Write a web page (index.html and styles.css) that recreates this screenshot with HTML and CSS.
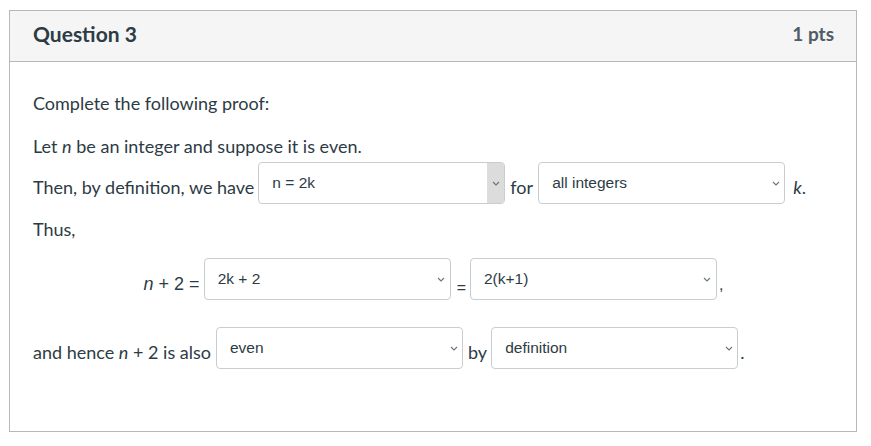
FILE: index.html
```html
<!DOCTYPE html>
<html lang="en">
<head>
<meta charset="utf-8">
<title>Question 3</title>
<link rel="stylesheet" href="styles.css">
</head>
<body>
<div class="card">
  <div class="card-header">
    <h2 class="title">Question 3</h2>
    <span class="pts">1 pts</span>
  </div>
  <div class="card-body">
    <p class="line">Complete the following proof:</p>
    <p class="line line-let">Let <i>n</i> be an integer and suppose it is even.</p>
    <div class="row row-then">
      <span class="txt">Then, by definition, we have</span>
      <div class="sel sel-hover sel-first"><span class="val">n = 2k</span><span class="caret"><svg width="8" height="5" viewBox="0 0 8 5"><path d="M1 1l3 3 3-3" fill="none" stroke="#6b747b" stroke-width="1.1"/></svg></span></div>
      <span class="txt">for</span>
      <div class="sel"><span class="val">all integers</span><span class="caret"><svg width="8" height="5" viewBox="0 0 8 5"><path d="M1 1l3 3 3-3" fill="none" stroke="#6b747b" stroke-width="1.1"/></svg></span></div>
      <span class="txt txt-k"><i>k</i>.</span>
    </div>
    <p class="line line-thus">Thus,</p>
    <div class="row row-eq">
      <span class="math"><i>n</i> + 2 =</span>
      <div class="sel"><span class="val">2k + 2</span><span class="caret"><svg width="8" height="5" viewBox="0 0 8 5"><path d="M1 1l3 3 3-3" fill="none" stroke="#6b747b" stroke-width="1.1"/></svg></span></div>
      <span class="eq-sign">=</span>
      <div class="sel"><span class="val">2(k+1)</span><span class="caret"><svg width="8" height="5" viewBox="0 0 8 5"><path d="M1 1l3 3 3-3" fill="none" stroke="#6b747b" stroke-width="1.1"/></svg></span></div>
      <span class="comma">,</span>
    </div>
    <div class="row row-hence">
      <span class="txt">and hence <i>n</i> + 2 is also</span>
      <div class="sel"><span class="val">even</span><span class="caret"><svg width="8" height="5" viewBox="0 0 8 5"><path d="M1 1l3 3 3-3" fill="none" stroke="#6b747b" stroke-width="1.1"/></svg></span></div>
      <span class="txt">by</span>
      <div class="sel sel-last"><span class="val">definition</span><span class="caret"><svg width="8" height="5" viewBox="0 0 8 5"><path d="M1 1l3 3 3-3" fill="none" stroke="#6b747b" stroke-width="1.1"/></svg></span></div>
      <span class="txt txt-dot">.</span>
    </div>
  </div>
</div>
</body>
</html>
```

FILE: styles.css
```css
* { box-sizing: border-box; }

html, body {
  margin: 0;
  padding: 0;
  background: #ffffff;
}

body {
  font-family: Lato, "Liberation Sans", sans-serif;
  color: #2d3b45;
  font-size: 18px;
}

.card {
  margin: 10px 0 0 9px;
  width: 848px;
  height: 422px;
  border: 1px solid #b4b9bd;
}

.card-header {
  display: flex;
  justify-content: space-between;
  align-items: flex-start;
  height: 51px;
  padding: 10px 22px 0 23px;
  background: #f5f5f5;
  border-bottom: 1px solid #b4b9bd;
}

.title {
  margin: 0;
  font-size: 21px;
  line-height: 26px;
  font-weight: 700;
  color: #2d3b45;
}

.pts {
  font-size: 19px;
  line-height: 26px;
  font-weight: 700;
  color: #4f5b66;
}

.card-body {
  display: flex;
  flex-direction: column;
  padding: 29px 22px 0 23px;
}

.line {
  margin: 0;
  line-height: 24px;
}

.line-let { margin-top: 19px; }
.line-thus { margin-top: 13px; }

.row {
  display: flex;
  align-items: flex-start;
  column-gap: 5px;
}

.row-then { margin-top: 4px; }
.row-eq {
  margin-top: 17px;
  justify-content: center;
  column-gap: 0;
}
.row-hence { margin-top: 27px; }

.sel-first { margin-left: -1px; }
.sel-last { margin-left: -1px; }

.txt {
  padding-top: 13px;
  line-height: 24px;
  white-space: nowrap;
}

.txt-k { margin-left: 3px; }
.txt-dot { margin-left: -3px; }

.sel {
  display: flex;
  justify-content: space-between;
  width: 247px;
  height: 42px;
  border: 1px solid #c7cdd1;
  border-radius: 4px;
  font-family: "Liberation Sans", Arial, sans-serif;
  font-size: 15.5px;
  color: #2d3b45;
  overflow: hidden;
  flex: none;
}

.val {
  padding: 11px 0 0 13px;
  line-height: 18px;
  white-space: nowrap;
}

.caret {
  display: flex;
  align-items: center;
  justify-content: center;
  width: 17px;
  height: 100%;
}

.sel-hover .caret {
  background: #dcdcdc;
}

.math {
  font-family: "Liberation Sans", Arial, sans-serif;
  font-size: 18px;
  line-height: 22px;
  padding-top: 15px;
  margin-right: 4px;
  white-space: nowrap;
}

.eq-sign {
  font-family: "Liberation Sans", Arial, sans-serif;
  font-size: 16px;
  line-height: 18px;
  padding-top: 21px;
  margin: 0 4px 0 6px;
}

.comma {
  font-family: "Liberation Sans", Arial, sans-serif;
  font-size: 16px;
  line-height: 18px;
  padding-top: 18px;
  margin-left: 2px;
}
```
